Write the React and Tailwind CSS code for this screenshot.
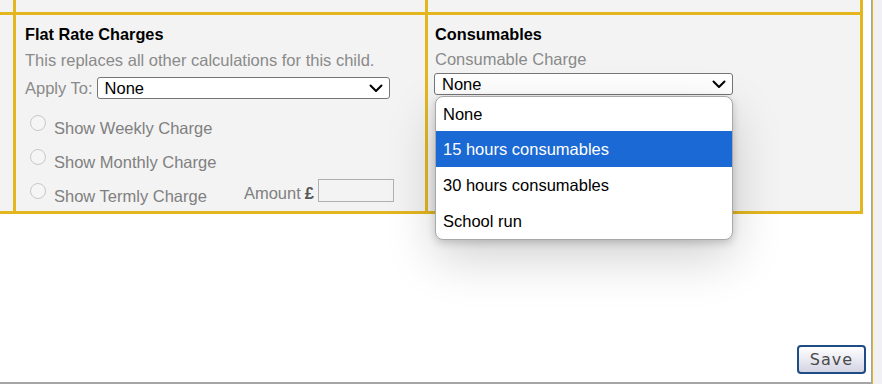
import React from "react";

const Chevron = () => (
  <svg width="14" height="9" viewBox="0 0 14 9" fill="none">
    <path d="M1.5 1.5 L7 7 L12.5 1.5" stroke="#000" strokeWidth="2" strokeLinecap="round" strokeLinejoin="round" />
  </svg>
);

const Circle = () => (
  <div className="mt-[5px] w-[16px] h-[16px] shrink-0 rounded-full border border-[#c8c8c8] bg-[#f5f5f5]" />
);

const Radio = ({ label }) => (
  <div className="flex items-start h-[34px]">
    <Circle />
    <span className="mt-[9px] ml-[8px] leading-[18px] text-[#808080]">{label}</span>
  </div>
);

export default function App() {
  return (
    <div
      className="w-[882px] h-[384px] flex bg-white overflow-hidden text-[16.5px]"
      style={{ fontFamily: '"Liberation Sans", Arial, sans-serif' }}
    >
      <div className="w-[871px] h-full flex flex-col relative">
        <div className="w-[863px] bg-[#e3b620] grid grid-cols-[13px_409px_432px] grid-rows-[12px_196px] gap-[3px] pr-[3px] pb-[3px]">
          <div className="bg-[#f3f3f3]" />
          <div className="bg-[#f3f3f3]" />
          <div className="bg-[#f3f3f3]" />
          <div className="bg-[#f3f3f3]" />
          {/* Flat rate charges */}
          <div className="bg-[#f3f3f3] pl-[9px] pt-[10px]">
            <div className="font-bold text-[16.3px] leading-[18px] text-black">Flat Rate Charges</div>
            <div className="mt-[8px] leading-[18px] text-[#8a8a8a]">
              This replaces all other calculations for this child.
            </div>
            <div className="mt-[8px] flex items-center h-[22px]">
              <span className="text-[#8a8a8a] leading-[18px]">Apply To:</span>
              <div className="ml-[4px] w-[293px] h-[22px] bg-white border border-[#767676] rounded-[3px] flex items-center justify-between pl-[7px] pr-[6px]">
                <span className="text-black leading-[18px]">None</span>
                <Chevron />
              </div>
            </div>
            <div className="mt-[11px] ml-[5px] w-[364px] flex flex-col">
              <Radio label="Show Weekly Charge" />
              <Radio label="Show Monthly Charge" />
              <div className="flex items-start h-[34px]">
                <Circle />
                <span className="mt-[9px] ml-[8px] leading-[18px] text-[#808080]">Show Termly Charge</span>
                <div className="ml-auto mt-[1px] flex items-start">
                  <span className="mt-[5px] text-[#808080] leading-[18px]">Amount</span>
                  <span className="mt-[5px] ml-[4px] font-bold text-[#555] leading-[18px]">£</span>
                  <div className="ml-[4px] w-[76px] h-[23px] border border-[#b0b0b0] bg-[#f3f3f3]" />
                </div>
              </div>
            </div>
          </div>
          {/* Consumables */}
          <div className="bg-[#f3f3f3] pl-[7px] pt-[10px]">
            <div className="font-bold text-[16.3px] leading-[18px] text-black">Consumables</div>
            <div className="mt-[7px] leading-[18px] text-[#8a8a8a]">Consumable Charge</div>
            <div className="mt-[5px] ml-[-1px] w-[299px] h-[22px] bg-white border border-[#767676] rounded-[3px] flex items-center justify-between pl-[7px] pr-[6px]">
              <span className="text-black leading-[18px]">None</span>
              <Chevron />
            </div>
          </div>
        </div>

        {/* Open dropdown */}
        <div className="absolute left-[435px] top-[96px] w-[298px] bg-white border border-[#a8a8a8] rounded-[8px] overflow-hidden shadow-[0_18px_50px_rgba(0,0,0,0.18),0_3px_8px_rgba(0,0,0,0.18)]">
          <div className="h-[34px] flex items-center pl-[7px] text-black">None</div>
          <div className="h-[36px] flex items-center pl-[7px] bg-[#1a69d4] text-white">15 hours consumables</div>
          <div className="h-[36px] flex items-center pl-[7px] text-black">30 hours consumables</div>
          <div className="h-[36px] flex items-center pl-[7px] text-black">School run</div>
        </div>

        <div className="flex-1 flex items-end justify-end pr-[5px] pb-[8px]">
          <button
            className="w-[69px] h-[29px] border-2 border-[#1f4c85] rounded-[4px] bg-gradient-to-b from-white to-[#d4d4e4] text-[#4a4a4a] text-[16px] tracking-[1px] leading-none"
            style={{ fontFamily: '"DejaVu Sans", Verdana, sans-serif' }}
          >
            Save
          </button>
        </div>
        <div className="h-[2px] bg-[#a5a5a5]" />
      </div>
      <div className="w-px h-full bg-[#a5a5a5]" />
      <div className="w-px h-full bg-[#e3b620]" />
      <div className="flex-1 h-full bg-[#f1f1f5]" />
    </div>
  );
}
